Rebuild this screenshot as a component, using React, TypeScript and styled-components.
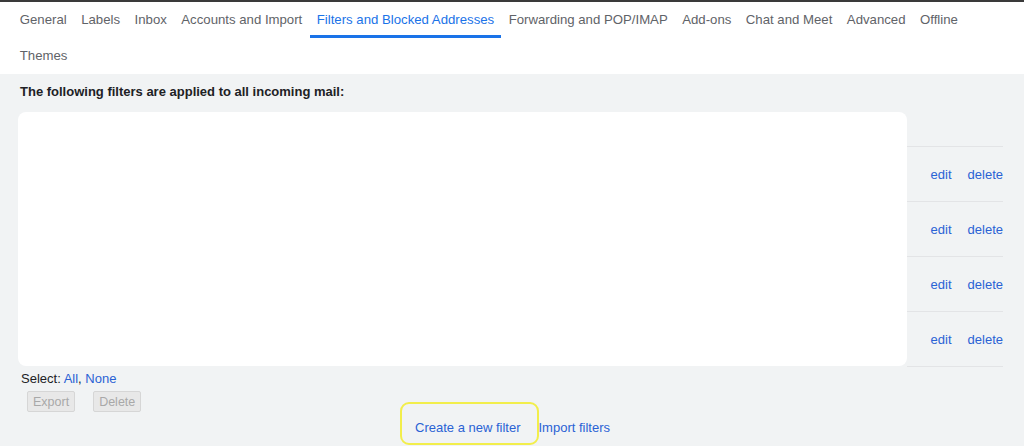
import React from "react";
import styled, { createGlobalStyle } from "styled-components";

const GlobalStyle = createGlobalStyle`
  html, body {
    margin: 0;
    padding: 0;
    background: #f1f3f4;
    font-family: "Liberation Sans", Arial, sans-serif;
  }
  * { box-sizing: border-box; }
`;

const tabs = [
  "General",
  "Labels",
  "Inbox",
  "Accounts and Import",
  "Filters and Blocked Addresses",
  "Forwarding and POP/IMAP",
  "Add-ons",
  "Chat and Meet",
  "Advanced",
  "Offline",
  "Themes",
];

const rows = [1, 2, 3, 4];

export default function App() {
  return (
    <Page>
      <GlobalStyle />
      <TabBar>
        {tabs.map((t) => (
          <Tab key={t} $active={t === "Filters and Blocked Addresses"}>
            {t}
          </Tab>
        ))}
      </TabBar>
      <Content>
        <Heading>The following filters are applied to all incoming mail:</Heading>
        <FilterArea>
          <Panel />
          <RowColumn>
            <HeadCell />
            {rows.map((r) => (
              <Row key={r}>
                <Link>edit</Link>
                <Link>delete</Link>
              </Row>
            ))}
          </RowColumn>
        </FilterArea>
        <SelectLine>
          Select: <Link>All</Link>, <Link>None</Link>
        </SelectLine>
        <Actions>
          <GrayButton disabled>Export</GrayButton>
          <GrayButton disabled>Delete</GrayButton>
        </Actions>
        <FilterLinks>
          <Highlight>
            <Link>Create a new filter</Link>
          </Highlight>
          <Link>Import filters</Link>
        </FilterLinks>
      </Content>
    </Page>
  );
}

const Page = styled.div`
  width: 1024px;
  height: 446px;
  overflow: hidden;
  background: #f1f3f4;
`;

const TabBar = styled.div`
  display: flex;
  flex-wrap: wrap;
  background: #fff;
  border-top: 2px solid #3a3a3a;
  padding: 0 30px 0 12.5px;
`;

const Tab = styled.div<{ $active?: boolean }>`
  height: 36px;
  padding: 1px 7.25px 0;
  display: flex;
  align-items: center;
  font-size: 13.2px;
  white-space: nowrap;
  color: ${(p) => (p.$active ? "#1a73e8" : "#5f6368")};
  border-bottom: 3px solid ${(p) => (p.$active ? "#1a73e8" : "transparent")};
`;

const Content = styled.div`
  padding: 10px 21px 0 18px;
`;

const Heading = styled.div`
  font-size: 13px;
  font-weight: bold;
  color: #202124;
  line-height: 16px;
  padding-left: 2px;
`;

const FilterArea = styled.div`
  display: flex;
  margin-top: 12px;
`;

const Panel = styled.div`
  width: 889px;
  height: 254px;
  background: #fff;
  border-radius: 8px;
`;

const RowColumn = styled.div`
  flex: 1;
  display: flex;
  flex-direction: column;
`;

const HeadCell = styled.div`
  height: 35px;
  border-bottom: 1px solid #e3e4e6;
`;

const Row = styled.div`
  height: 55px;
  display: flex;
  align-items: center;
  justify-content: flex-end;
  gap: 16px;
  border-bottom: 1px solid #e3e4e6;
  font-size: 13px;
`;

const Link = styled.span`
  color: #2a62d4;
  cursor: pointer;
  font-size: 13px;
`;

const SelectLine = styled.div`
  margin-top: 4px;
  padding-left: 3px;
  font-size: 13px;
  line-height: 16px;
  color: #202124;
`;

const Actions = styled.div`
  display: flex;
  gap: 18px;
  margin-top: 4px;
  padding-left: 9px;
`;

const GrayButton = styled.button`
  height: 21px;
  padding: 0 5px;
  font-family: "Liberation Sans", Arial, sans-serif;
  font-size: 12.5px;
  color: #a8a8a8;
  background: #e8e8e8;
  border: 1px solid #d6d6d6;
  border-radius: 2px;
`;

const FilterLinks = styled.div`
  display: flex;
  align-items: baseline;
  margin-top: -10px;
  padding-left: 382px;
`;

const Highlight = styled.span`
  display: inline-flex;
  align-items: center;
  height: 43px;
  padding: 7px 16px 0 13px;
  border: 2px solid #f2ee4b;
  border-radius: 9px;
`;
